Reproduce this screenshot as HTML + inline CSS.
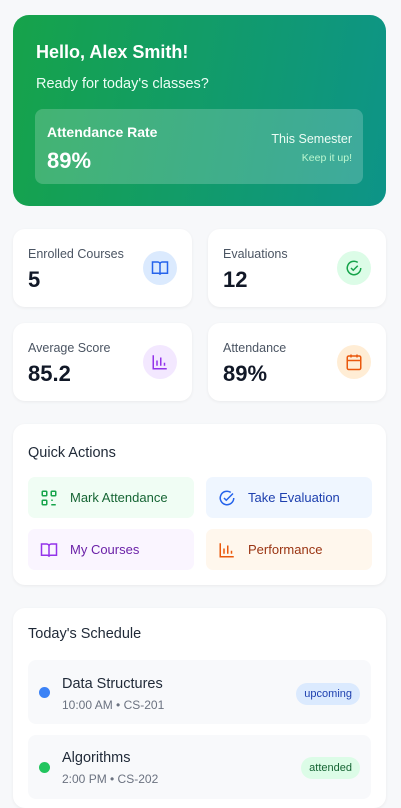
<!DOCTYPE html>
<html><head><style>
*{box-sizing:border-box;margin:0;padding:0}
body{width:401px;height:795px;overflow:hidden;background:#f7f8fa;font-family:"Liberation Sans",sans-serif;color:#111827;position:relative}
.abs{position:absolute}
.hero{left:13px;top:15px;width:373px;height:191px;border-radius:16px;background:linear-gradient(100deg,#16a34a,#0d9488)}
.hero h1{position:absolute;left:23px;top:27px;font-size:18px;color:#fff;font-weight:bold}
.hero .sub{position:absolute;left:23px;top:61px;font-size:14.5px;color:#ecfdf5}
.hero .box{position:absolute;left:22px;top:94px;width:328px;height:75px;border-radius:8px;background:rgba(255,255,255,.2)}
.card{position:absolute;background:#fff;border-radius:12px;box-shadow:0 1px 3px rgba(0,0,0,.06)}
.lbl{position:absolute;left:15px;top:18px;font-size:12.5px;color:#4b5563}
.val{position:absolute;left:15px;top:38px;font-size:22px;font-weight:bold;color:#111827}
.ic{position:absolute;right:15px;top:22px;width:34px;height:34px;border-radius:50%;display:flex;align-items:center;justify-content:center}
.qa{position:absolute;height:41px;width:166px;border-radius:7px;display:flex;align-items:center;font-size:13px}
.qa svg{margin-left:12px;margin-right:12px}
.item{position:absolute;left:15px;width:343px;border-radius:8px;background:#f8f9fb}
.dot{position:absolute;left:11px;width:11px;height:11px;border-radius:50%}
.t{position:absolute;left:34px;font-size:14.5px;color:#1f2937}
.s{position:absolute;left:34px;font-size:12px;color:#6b7280}
.pill{position:absolute;right:11px;height:22px;border-radius:11px;font-size:11px;padding:0 8px;line-height:22px}
</style></head><body>
<div class="abs hero">
<h1>Hello, Alex Smith!</h1>
<div class="sub">Ready for today's classes?</div>
<div class="box">
<div class="abs" style="left:12px;top:15px;color:#fff;font-weight:bold;font-size:14px">Attendance Rate</div>
<div class="abs" style="left:12px;top:39px;color:#fff;font-weight:bold;font-size:22px">89%</div>
<div class="abs" style="right:11px;top:23px;color:#ecfdf5;font-size:12.5px">This Semester</div>
<div class="abs" style="right:11px;top:43px;color:#bbf7d0;font-size:10.5px">Keep it up!</div>
</div>
</div>

<div class="card" style="left:13px;top:229px;width:179px;height:78px">
<div class="lbl">Enrolled Courses</div><div class="val">5</div>
<div class="ic" style="background:#dbeafe"><svg width="18" height="18" viewBox="0 0 24 24" fill="none" stroke="#2563eb" stroke-width="2"><path d="M2 4h7a3 3 0 0 1 3 3v14a2 2 0 0 0-2-2H2zM22 4h-7a3 3 0 0 0-3 3v14a2 2 0 0 1 2-2h8z"/></svg></div>
</div>
<div class="card" style="left:208px;top:229px;width:178px;height:78px">
<div class="lbl">Evaluations</div><div class="val">12</div>
<div class="ic" style="background:#dcfce7"><svg width="18" height="18" viewBox="0 0 24 24" fill="none" stroke="#16a34a" stroke-width="2"><path d="M21 12a9 9 0 1 1-4-7.5"/><path d="M8 12l3 3 6-6"/></svg></div>
</div>
<div class="card" style="left:13px;top:323px;width:179px;height:78px">
<div class="lbl">Average Score</div><div class="val">85.2</div>
<div class="ic" style="background:#f3e8ff"><svg width="18" height="18" viewBox="0 0 24 24" fill="none" stroke="#9333ea" stroke-width="2"><path d="M3 3v18h18M8 17v-7M13 17V6M18 17v-4"/></svg></div>
</div>
<div class="card" style="left:208px;top:323px;width:178px;height:78px">
<div class="lbl">Attendance</div><div class="val">89%</div>
<div class="ic" style="background:#ffedd5"><svg width="18" height="18" viewBox="0 0 24 24" fill="none" stroke="#ea580c" stroke-width="2"><rect x="3" y="4" width="18" height="18" rx="2"/><path d="M3 10h18M8 2v4M16 2v4"/></svg></div>
</div>

<div class="card" style="left:13px;top:424px;width:373px;height:161px">
<div class="abs" style="left:15px;top:21px;font-size:14.5px;color:#1f2937">Quick Actions</div>
<div class="qa" style="left:15px;top:53px;background:#f0fdf4;color:#166534"><svg width="18" height="18" viewBox="0 0 24 24" fill="none" stroke="#16a34a" stroke-width="2"><rect x="3" y="3" width="6" height="6" rx="1"/><rect x="15" y="3" width="6" height="6" rx="1"/><rect x="3" y="15" width="6" height="6" rx="1"/><path d="M15 15h2M21 15v0M15 21h6M18 18v0"/></svg>Mark Attendance</div>
<div class="qa" style="left:193px;top:53px;background:#eff6ff;color:#1e40af"><svg width="18" height="18" viewBox="0 0 24 24" fill="none" stroke="#2563eb" stroke-width="2"><path d="M21 12a9 9 0 1 1-4-7.5"/><path d="M8 12l3 3 9-9"/></svg>Take Evaluation</div>
<div class="qa" style="left:15px;top:105px;background:#faf5ff;color:#6b21a8"><svg width="18" height="18" viewBox="0 0 24 24" fill="none" stroke="#9333ea" stroke-width="2"><path d="M2 4h7a3 3 0 0 1 3 3v14a2 2 0 0 0-2-2H2zM22 4h-7a3 3 0 0 0-3 3v14a2 2 0 0 1 2-2h8z"/></svg>My Courses</div>
<div class="qa" style="left:193px;top:105px;background:#fff7ed;color:#9a3412"><svg width="18" height="18" viewBox="0 0 24 24" fill="none" stroke="#ea580c" stroke-width="2"><path d="M3 3v18h18M8 17v-7M13 17V6M18 17v-4"/></svg>Performance</div>
</div>

<div class="card" style="left:13px;top:608px;width:373px;height:200px">
<div class="abs" style="left:15px;top:18px;font-size:14.5px;color:#1f2937">Today's Schedule</div>
<div class="item" style="top:52px;height:64px">
<div class="dot" style="top:27px;background:#3b82f6"></div>
<div class="t" style="top:16px">Data Structures</div>
<div class="s" style="top:38px">10:00 AM • CS-201</div>
<div class="pill" style="top:23px;background:#dbeafe;color:#1e40af">upcoming</div>
</div>
<div class="item" style="top:127px;height:64px">
<div class="dot" style="top:27px;background:#22c55e"></div>
<div class="t" style="top:15px">Algorithms</div>
<div class="s" style="top:37px">2:00 PM • CS-202</div>
<div class="pill" style="top:22px;background:#dcfce7;color:#166534">attended</div>
</div>
</div>
</body></html>
